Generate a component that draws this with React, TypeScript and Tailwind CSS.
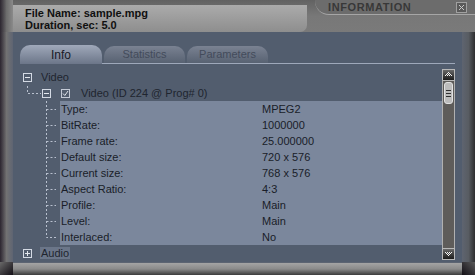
import React from 'react'

const props: [string, string][] = [
  ['Type:', 'MPEG2'],
  ['BitRate:', '1000000'],
  ['Frame rate:', '25.000000'],
  ['Default size:', '720 x 576'],
  ['Current size:', '768 x 576'],
  ['Aspect Ratio:', '4:3'],
  ['Profile:', 'Main'],
  ['Level:', 'Main'],
  ['Interlaced:', 'No'],
]

const LINE = '#b8c0ce'

function TreeBox({ open }: { open: boolean }) {
  return (
    <svg width="9" height="9" viewBox="0 0 9 9" className="shrink-0">
      <rect x="0.5" y="0.5" width="8" height="8" fill="none" stroke="#d4dae4" />
      <line x1="2" y1="4.5" x2="7" y2="4.5" stroke="#e4e8ee" />
      {!open && <line x1="4.5" y1="2" x2="4.5" y2="7" stroke="#e4e8ee" />}
    </svg>
  )
}

function Check() {
  return (
    <svg width="9" height="9" viewBox="0 0 9 9" className="shrink-0">
      <rect x="0.5" y="0.5" width="8" height="8" fill="none" stroke="#c4cad6" />
      <path d="M2 4.5 L3.8 6.5 L7 2" fill="none" stroke="#dfe3ea" strokeWidth="1" />
    </svg>
  )
}

function ScrollArrow({ up }: { up: boolean }) {
  return (
    <div className="flex h-[12px] items-center justify-center border border-[#b8b8b8] bg-gradient-to-b from-[#6a6a6a] to-[#1c1c1c]">
      <svg width="9" height="6" viewBox="0 0 9 6">
        {up ? (
          <g fill="#f2f2f2">
            <rect x="4" y="0" width="1" height="1" />
            <rect x="3" y="1" width="1" height="1" />
            <rect x="5" y="1" width="1" height="1" />
            <rect x="2" y="2" width="1" height="1" />
            <rect x="4" y="2" width="1" height="1" />
            <rect x="6" y="2" width="1" height="1" />
            <rect x="1" y="3" width="1" height="1" />
            <rect x="3" y="3" width="1" height="1" />
            <rect x="5" y="3" width="1" height="1" />
            <rect x="7" y="3" width="1" height="1" />
          </g>
        ) : (
          <g fill="#f2f2f2">
            <rect x="1" y="1" width="1" height="1" />
            <rect x="3" y="1" width="1" height="1" />
            <rect x="5" y="1" width="1" height="1" />
            <rect x="7" y="1" width="1" height="1" />
            <rect x="2" y="2" width="1" height="1" />
            <rect x="4" y="2" width="1" height="1" />
            <rect x="6" y="2" width="1" height="1" />
            <rect x="3" y="3" width="1" height="1" />
            <rect x="5" y="3" width="1" height="1" />
            <rect x="4" y="4" width="1" height="1" />
          </g>
        )}
      </svg>
    </div>
  )
}

export default function App() {
  return (
    <div
      className="flex h-[275px] w-[475px] flex-col overflow-hidden bg-[#3a3a3a] text-[11px]"
      style={{ fontFamily: '"Liberation Sans", Arial, sans-serif' }}
    >
      {/* header */}
      <div className="flex h-[32px] shrink-0 bg-gradient-to-b from-[#626262] via-[#787878] to-[#7a7a7a]">
        <div className="w-[13px] shrink-0 bg-gradient-to-r from-[#2c2630] via-[#6c6c6c] to-[#8a8a8a]" />
        <div className="mt-[5px] h-[27px] w-[294px] shrink-0 rounded-br-[7px] bg-gradient-to-b from-[#ababab] to-[#8e8e8e] pl-[12px] pt-[2px] font-bold leading-[12px] text-[#101010]">
          <div>File Name: sample.mpg</div>
          <div>Duration, sec: 5.0</div>
        </div>
        <div className="ml-[8px] flex h-[15px] flex-1 items-center rounded-bl-[14px] border-b border-[#a6a6a6] bg-[#6c6c6c]">
          <span className="ml-[13px] font-bold tracking-[0.6px] text-[#383838]">INFORMATION</span>
          <div className="ml-auto mr-[8px] flex h-[11px] w-[11px] items-center justify-center border border-[#a0a0a0] bg-[#5a5a5a]">
            <svg width="7" height="7" viewBox="0 0 7 7">
              <path d="M1 1 L6 6 M6 1 L1 6" stroke="#c8c8c8" strokeWidth="1" />
            </svg>
          </div>
        </div>
      </div>

      {/* middle */}
      <div className="flex h-[230px] shrink-0">
        <div className="w-[13px] shrink-0 bg-gradient-to-r from-[#2c2630] via-[#727272] to-[#5e6472]" />
        <div className="flex w-[449px] shrink-0 flex-col bg-[#525d6e]">
          {/* tabs */}
          <div className="mt-[13px] flex h-[19px] items-end pl-[7px] pr-[7px]">
            <div className="flex h-[19px] w-[82px] items-center justify-center rounded-t-[10px] bg-gradient-to-b from-[#a0a9ba] to-[#6c7689] text-[12px] text-[#181a26]">
              Info
            </div>
            <div className="flex h-[19px] flex-1 items-end gap-[2px] border-b border-[#9ea8ba] pl-[2px]">
              <div className="flex h-[17px] w-[81px] items-center justify-center rounded-t-[10px] bg-gradient-to-b from-[#7a8292] to-[#586272] text-[#434b5b]">
                Statistics
              </div>
              <div className="flex h-[17px] w-[81px] items-center justify-center rounded-t-[10px] bg-gradient-to-b from-[#7a8292] to-[#586272] text-[#434b5b]">
                Parameters
              </div>
            </div>
          </div>

          {/* tree + scrollbar */}
          <div className="mt-[5px] flex">
            <div className="w-[429px] shrink-0 text-[#20252f]">
              <div className="flex h-[16px] items-center pl-[10px]">
                <TreeBox open />
                <span className="ml-[9px]">Video</span>
              </div>
              <div className="flex h-[16px] items-center">
                <svg width="29" height="16" className="shrink-0">
                  <path d="M14.5 1 V8.5 H28" fill="none" stroke={LINE} strokeDasharray="2 2" />
                </svg>
                <TreeBox open />
                <span className="ml-[10px] flex"><Check /></span>
                <span className="ml-[11px]">Video (ID 224 @ Prog# 0)</span>
              </div>
              {props.map(([k, v], i) => (
                <div key={k} className="flex h-[16px]">
                  <svg width="47" height="16" className="shrink-0">
                    <path
                      d={i === props.length - 1 ? 'M33.5 0 V8.5 H43' : 'M33.5 0 V16 M33.5 8.5 H43'}
                      fill="none"
                      stroke={LINE}
                      strokeDasharray="2 2"
                    />
                  </svg>
                  <div className="flex flex-1 items-center bg-[#7b879c] text-[#191d28]">
                    <span className="w-[202px] pl-px">{k}</span>
                    <span>{v}</span>
                  </div>
                </div>
              ))}
              <div className="flex h-[16px] items-center pl-[10px]">
                <TreeBox open={false} />
                <span className="ml-[8px] bg-[#6b7689] px-px leading-[12px]">Audio</span>
              </div>
            </div>

            <div className="flex h-[191px] w-[13px] shrink-0 flex-col">
              <ScrollArrow up />
              <div className="flex flex-1 flex-col border-x border-[#b0b0b0] bg-[#5e5c5a] px-px pt-px">
                <div className="flex h-[22px] flex-col items-center justify-center gap-[2px] rounded-[3px] border border-[#e2e2e2] bg-[#bcbcbc]">
                  <div className="h-px w-[5px] bg-[#303030]" />
                  <div className="h-px w-[5px] bg-[#303030]" />
                  <div className="h-px w-[5px] bg-[#303030]" />
                </div>
              </div>
              <ScrollArrow up={false} />
            </div>
          </div>
        </div>
        <div className="w-[13px] shrink-0 bg-gradient-to-r from-[#5e6470] via-[#585c62] to-[#2e2e30]" />
      </div>

      {/* bottom */}
      <div className="flex h-[13px] shrink-0">
        <div className="w-[13px] shrink-0 bg-gradient-to-br from-[#6a6a6a] to-[#141016]" />
        <div className="flex-1 border-t border-[#5c6472] bg-gradient-to-b from-[#a4a4a4] via-[#8a8a8a] to-[#3c3c3c]" />
        <div className="w-[13px] shrink-0 bg-gradient-to-bl from-[#5a5a5a] to-[#141016]" />
      </div>
    </div>
  )
}
